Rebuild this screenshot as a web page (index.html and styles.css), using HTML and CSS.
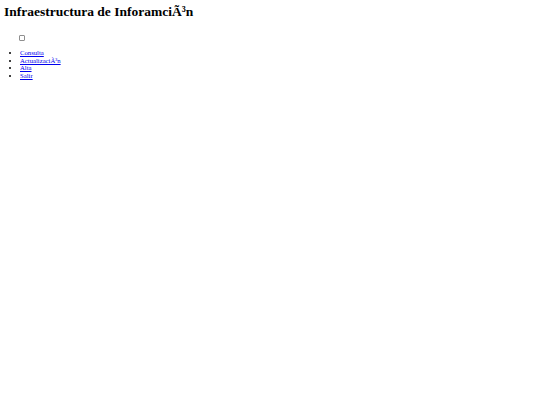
FILE: index.html
```html
<!DOCTYPE html>
<html lang="es">
<head>
<meta charset="utf-8">
<title>Infraestructura de Información</title>
<link rel="stylesheet" href="styles.css">
</head>
<body>
<header class="header">
  <h1 class="title">Infraestructura de InforamciÃ³n</h1>
  <nav class="nav">
    <input type="checkbox" class="toggle">
    <ul class="menu">
      <li><a href="#">Consulta</a></li>
      <li><a href="#">ActualizaciÃ³n</a></li>
      <li><a href="#">Alta</a></li>
      <li><a href="#">Salir</a></li>
    </ul>
  </nav>
</header>
</body>
</html>
```
FILE: styles.css
```css
html, body {
  background: #ffffff;
}
body {
  margin: 0;
  padding: 3px 4px;
  font-family: "Liberation Serif", "Times New Roman", serif;
  color: #000000;
}
.title {
  margin: 0;
  font-size: 13.5px;
  line-height: 17px;
  font-weight: bold;
}
.nav {
  padding-top: 15px;
}
.toggle {
  appearance: none;
  -webkit-appearance: none;
  display: block;
  box-sizing: border-box;
  width: 6px;
  height: 6px;
  margin: 0 0 0 15px;
  border: 1px solid #8f8f8f;
  border-radius: 1px;
  background: #ffffff;
}
.menu {
  margin: 8px 0 0 0;
  padding-left: 16px;
  font-size: 6.7px;
  line-height: 7.6px;
}
.menu a {
  color: #0000ee;
}
```
